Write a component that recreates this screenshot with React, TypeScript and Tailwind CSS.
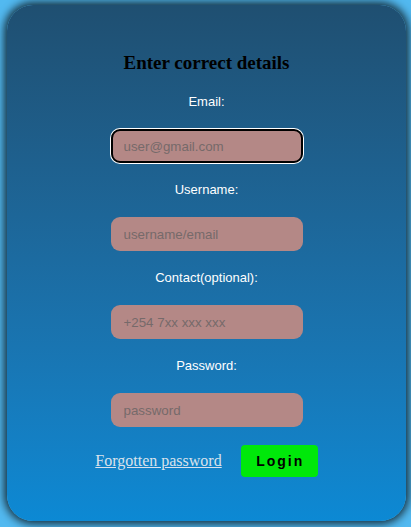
export default function App() {
  const fields = [
    { label: 'Email:', placeholder: 'user@gmail.com', type: 'email' },
    { label: 'Username:', placeholder: 'username/email', type: 'text' },
    { label: 'Contact(optional):', placeholder: '+254 7xx xxx xxx', type: 'tel' },
    { label: 'Password:', placeholder: 'password', type: 'password' },
  ];

  return (
    <div className="h-[527px] bg-[#52b9f0] pt-[5px] pr-[5px] pb-[6px] pl-[7px]">
      <div className="flex h-full flex-col items-center rounded-[26px] bg-gradient-to-b from-[#1f4f71] to-[#0c89d4] pt-[47px] shadow-[0_0_8px_3px_rgba(0,0,0,0.75)]">
        <h2 className="font-['Liberation_Serif',serif] text-[19px] leading-[22px] font-bold text-black">
          Enter correct details
        </h2>
        <form className="mt-[21px] flex flex-col items-center font-['Liberation_Sans',Arial,sans-serif]">
          {fields.map((field, i) => (
            <div key={field.label} className="flex flex-col items-center">
              <label className="text-[13px] leading-[14px] text-white">
                {field.label}
              </label>
              <input
                type={field.type}
                placeholder={field.placeholder}
                autoFocus={i === 0}
                className={
                  i === 0
                    ? 'mt-5 mb-5 h-[34px] w-[192px] rounded-[9px] border-2 border-black bg-[#b48886] pl-[11px] text-[13.33px] text-black outline-none ring-1 ring-white placeholder:text-[#766a6a]'
                    : 'mt-5 mb-5 h-[34px] w-[192px] rounded-[9px] border-0 bg-[#b48886] pl-[13px] text-[13.33px] text-black outline-none placeholder:text-[#766a6a]'
                }
              />
            </div>
          ))}
          <div className="-mt-[2px] flex items-center gap-[19px]">
            <a
              href="#"
              className="font-['Liberation_Serif',serif] text-[16px] text-[#d9e2ec] underline"
            >
              Forgotten password
            </a>
            <button
              type="button"
              className="h-[32px] w-[77px] rounded-[4px] bg-[#00e80a] pl-[2px] text-[14px] font-bold tracking-[2px] text-black"
            >
              Login
            </button>
          </div>
        </form>
      </div>
    </div>
  );
}
